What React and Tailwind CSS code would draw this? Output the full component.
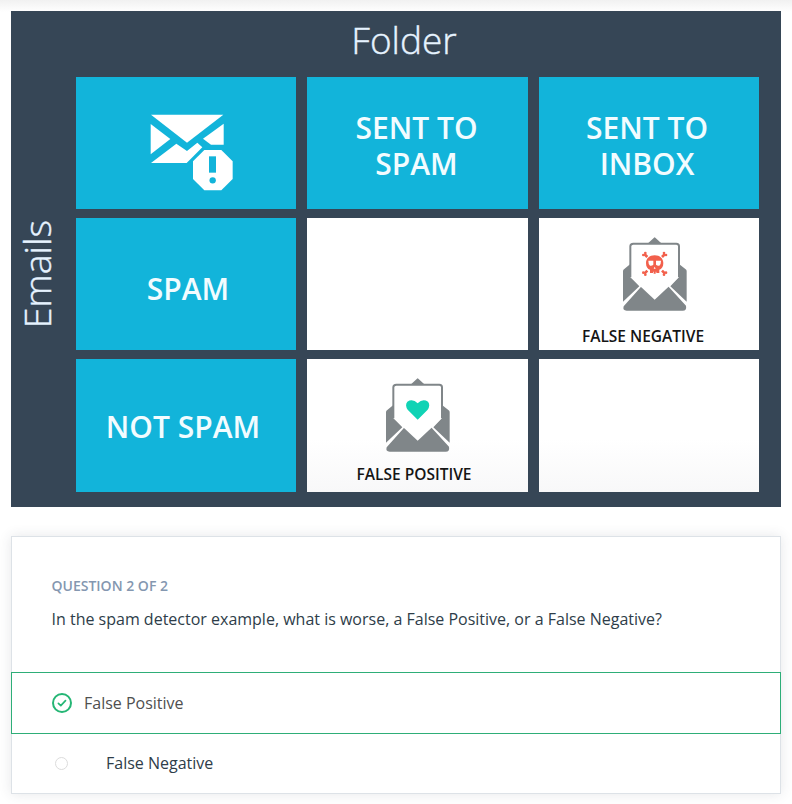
function SpamMailIcon() {
  return (
    <svg className="block h-[110px] w-[120px]" viewBox="0 0 360 330" fill="#fff">
      <path d="M63 59H280L171 143Z" />
      <path d="M62 87L121 132L62 178Z" />
      <path d="M281 86V149H243L219 131Z" />
      <path d="M63 204L139 146L171 168L202 143L217 157L170 204Z" />
      <path d="M223 165H274L308 199V252L274 286H223L189 252V199Z" />
      <path d="M237 184H258V233H237Z" fill="#12b4da" />
      <circle cx="248" cy="256" r="9.5" fill="#12b4da" />
    </svg>
  );
}

function OpenEnvelope({ children }) {
  return (
    <svg className="block h-[75px] w-[66px]" viewBox="0 0 198 225">
      <g fill="#808689">
        <path d="M78 19L96 2Q98 0 100 2L118 19L124 26H72Z" />
        <path d="M3 103V194L52 148L25 120V81L6 97Q3 99 3 103Z" />
        <path d="M194 103V194L145 148L171 120V81L191 97Q194 99 194 103Z" />
        <path d="M60 146L98 186L137 146L192 206Q195 221 182 221H14Q1 221 5 208Z" />
      </g>
      <path d="M34 20H163Q171 20 171 28V120L98 188L25 120V28Q25 20 34 20Z" fill="#fff" />
      <path
        d="M25 121V28Q25 20 34 20H163Q171 20 171 28V121"
        fill="none"
        stroke="#808689"
        strokeWidth="6"
      />
      {children}
    </svg>
  );
}

function Heart() {
  return (
    <path
      d="M98 125L68 95Q59 81 67 71Q83 60 98 76Q113 60 129 71Q137 81 128 95Z"
      fill="#10d3b5"
    />
  );
}

function Skull() {
  return (
    <g>
      <path
        d="M67 51L76 60M129 51L120 60M67 110L76 101M129 110L120 101"
        stroke="#f2604c"
        strokeWidth="8"
      />
      <g fill="#f2604c">
        <circle cx="64" cy="54" r="4" />
        <circle cx="70" cy="48" r="4" />
        <circle cx="132" cy="54" r="4" />
        <circle cx="126" cy="48" r="4" />
        <circle cx="64" cy="107" r="4" />
        <circle cx="70" cy="113" r="4" />
        <circle cx="132" cy="107" r="4" />
        <circle cx="126" cy="113" r="4" />
        <path d="M98 55C82 55 72 65 72 78C72 90 77 96 84 98V108H93V104H95V110H101V104H103V108H112V98C119 96 124 90 124 78C124 65 114 55 98 55Z" />
      </g>
      <path
        d="M79 71H94V83Q90 87 84 86Q79 82 79 71ZM117 71H102V83Q106 87 112 86Q117 82 117 71ZM95 95L98 89L101 95Z"
        fill="#fff"
      />
    </g>
  );
}

function Label({ lines, className }) {
  return (
    <div
      className={
        "flex flex-col items-center justify-center bg-[#12b4da] text-center text-[30px] font-semibold text-[#f2fcff] " +
        className
      }
    >
      {lines.map((line) => (
        <div key={line} className="h-9 leading-9">
          {line}
        </div>
      ))}
    </div>
  );
}

function Outcome({ icon, text, className, textClass }) {
  return (
    <div className={"flex flex-col items-center " + className}>
      <OpenEnvelope>{icon}</OpenEnvelope>
      <span className={"text-[15.5px] leading-5 font-semibold whitespace-nowrap text-[#151515] " + textClass}>
        {text}
      </span>
    </div>
  );
}

export default function App() {
  return (
    <div className="h-[804px] bg-linear-to-b from-[#f1f1f1] from-0% to-white to-[12px] px-[11px] pt-[11px] font-['Open_Sans','Noto_Sans',sans-serif]">
      <section className="h-[496px] bg-[#364656]">
        <h1 className="h-[66px] pl-4 text-center text-[37px] leading-[57px] font-light text-[#e6f3ff] [-webkit-text-stroke:0.4px_#e6f3ff]">
          Folder
        </h1>
        <div className="flex">
          <div className="flex h-[415px] w-[65px] items-center justify-center pr-3.5 pb-5">
            <span className="rotate-180 text-[37.5px] leading-[52px] font-light text-[#e6f3ff] [-webkit-text-stroke:0.4px_#e6f3ff] [writing-mode:vertical-rl]">
              Emails
            </span>
          </div>
          <div className="grid grid-cols-[220px_221px_220px] grid-rows-[132px_132px_133px] gap-x-[11px] gap-y-[9px]">
            <div className="bg-[#12b4da] pt-[18px] pl-[54px]">
              <SpamMailIcon />
            </div>
            <Label lines={["SENT TO", "SPAM"]} className="pt-1.5 pr-[2px]" />
            <Label lines={["SENT TO", "INBOX"]} className="pt-1.5 pr-[4px]" />
            <Label lines={["SPAM"]} className="pt-2.5 pl-1" />
            <div className="bg-white" />
            <Outcome
              icon={<Skull />}
              text="FALSE NEGATIVE"
              className="bg-white pt-[19px] pl-3"
              textClass="mt-[14px] mr-6"
            />
            <Label lines={["NOT SPAM"]} className="pt-0.5 pr-1.5" />
            <Outcome
              icon={<Heart />}
              text="FALSE POSITIVE"
              className="bg-linear-to-b from-white from-60% to-[#f8f8f9] pt-[19px]"
              textClass="mt-[11px] mr-[7px]"
            />
            <div className="bg-linear-to-b from-white from-60% to-[#f8f8f9]" />
          </div>
        </div>
      </section>

      <section className="mt-[29px] h-[258px] border border-[#dde2e7] bg-white shadow-[0_0_12px_rgba(46,61,73,0.12)]">
        <div className="h-[135px] px-[39.5px] pt-[38px]">
          <h2 className="text-sm leading-[22px] font-semibold text-[#8497b0]">QUESTION 2 OF 2</h2>
          <p className="mt-[10px] text-base leading-6 whitespace-nowrap text-[#2e3d49]">
            In the spam detector example, what is worse, a False Positive, or a False Negative?
          </p>
        </div>
        <div className="-mx-px flex h-[62px] items-center border border-[#2eae78] pl-10 text-base text-[#4f4f4f]">
          <svg className="mr-3 h-5 w-5" viewBox="0 0 20 20" fill="none" stroke="#25b675">
            <circle cx="10" cy="10" r="9" strokeWidth="2" />
            <path d="M6.4 10.3L8.8 12.6L13.5 7.7" strokeWidth="1.7" strokeLinecap="round" strokeLinejoin="round" />
          </svg>
          <span>False Positive</span>
        </div>
        <div className="flex h-[58px] items-center pl-[43px] text-base text-[#2e3d49]">
          <span className="mr-[38px] h-[13px] w-[13px] rounded-full border border-[#dcdcdc]" />
          <span>False Negative</span>
        </div>
      </section>
    </div>
  );
}
